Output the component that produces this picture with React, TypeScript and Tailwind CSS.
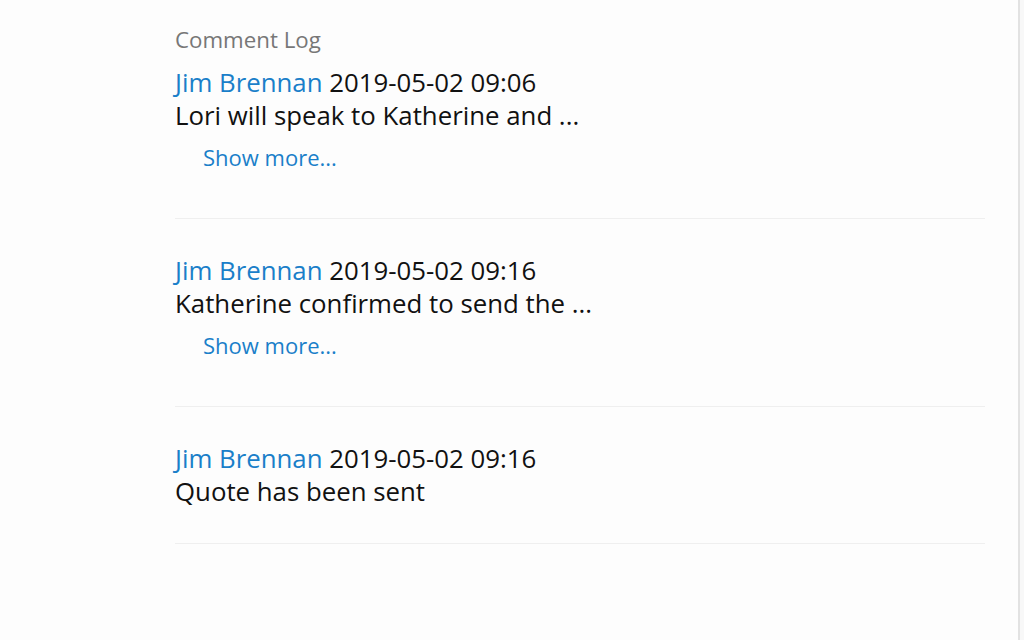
export default function App() {
  const items = [
    { date: "2019-05-02 09:06", text: "Lori will speak to Katherine and ...", more: true },
    { date: "2019-05-02 09:16", text: "Katherine confirmed to send the ...", more: true },
    { date: "2019-05-02 09:16", text: "Quote has been sent", more: false },
  ];
  return (
    <div
      className="flex h-[640px] w-[1024px] bg-[#fdfdfd]"
      style={{ fontFamily: '"Open Sans", sans-serif' }}
    >
      <div className="flex-1 pl-[175px] pr-[33px] pt-[25.5px]">
        <div className="text-[22.3px] leading-[28px] text-[#777777]">Comment Log</div>
        <div className="mt-[12px]">
          {items.map((it, i) => (
            <div
              key={i}
              className={`border-b border-[#efefef] ${i === 0 ? "" : "pt-[34.5px]"} ${it.more ? "pb-[47px]" : "pb-[35.5px]"}`}
            >
              <div className="text-[25.8px] leading-[33px] text-[#111111]">
                <span className="text-[#1a7fc9]">Jim Brennan</span> {it.date}
              </div>
              <div className="text-[25.8px] leading-[33px] text-[#111111]">{it.text}</div>
              {it.more && (
                <div className="mt-[11.5px] pl-[28px] text-[22px] leading-[28px] text-[#1a7fc9]">Show more...</div>
              )}
            </div>
          ))}
        </div>
      </div>
      <div className="w-[6px] border-l-2 border-[#e2e2e2] bg-[#f8f8f8]" />
    </div>
  );
}
